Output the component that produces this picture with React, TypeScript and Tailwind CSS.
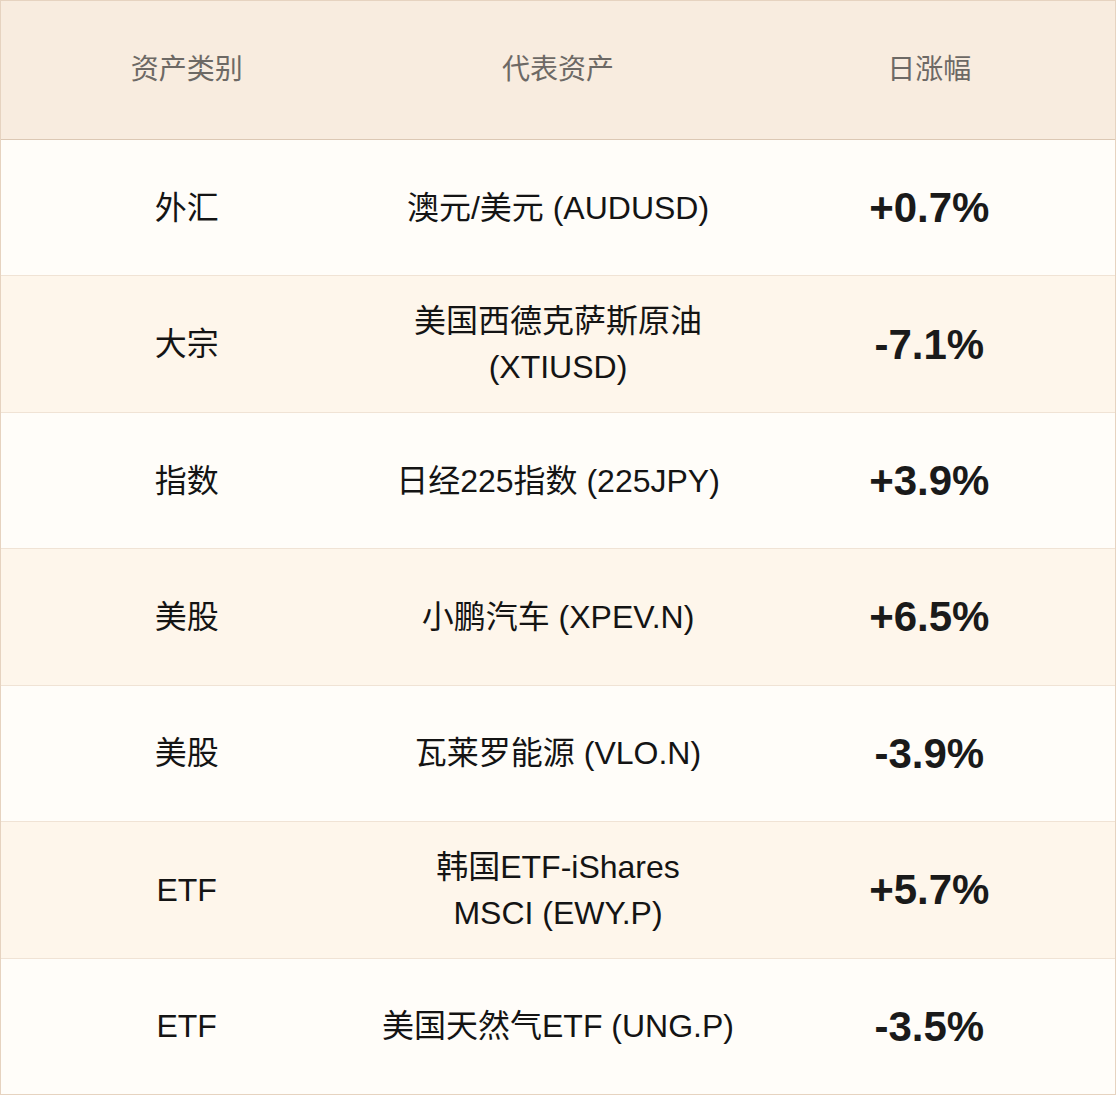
import React from 'react';

type Row = {
    category: string;
    asset: string[];
    change: string;
};

const rows: Row[] = [
    { category: '外汇', asset: ['澳元/美元 (AUDUSD)'], change: '+0.7%' },
    { category: '大宗', asset: ['美国西德克萨斯原油', '(XTIUSD)'], change: '-7.1%' },
    { category: '指数', asset: ['日经225指数 (225JPY)'], change: '+3.9%' },
    { category: '美股', asset: ['小鹏汽车 (XPEV.N)'], change: '+6.5%' },
    { category: '美股', asset: ['瓦莱罗能源 (VLO.N)'], change: '-3.9%' },
    { category: 'ETF', asset: ['韩国ETF-iShares', 'MSCI (EWY.P)'], change: '+5.7%' },
    { category: 'ETF', asset: ['美国天然气ETF (UNG.P)'], change: '-3.5%' },
];

const font = "font-['Liberation_Sans','Noto_Sans_CJK_SC',sans-serif]";

export default function App() {
    return (
        <div className={`${font} w-[1116px] h-[1095px] flex flex-col border border-[#e6d3c0] bg-[#fffdf9]`}>
            <div className="h-[139px] shrink-0 grid grid-cols-3 items-center border-b border-[#dcc8b4] bg-[#f8ecdf] text-[28px] text-[#6d6965]">
                <div className="text-center">资产类别</div>
                <div className="text-center">代表资产</div>
                <div className="text-center">日涨幅</div>
            </div>
            {rows.map((row, i) => (
                <div
                    key={i}
                    className={`flex-1 grid grid-cols-3 items-center ${i % 2 === 1 ? 'bg-[#fef6eb]' : 'bg-[#fffdf9]'} ${i < rows.length - 1 ? 'border-b border-[#f0e3d5]' : ''}`}
                >
                    <div className="text-center text-[32px] text-[#141414]">{row.category}</div>
                    <div className="text-center text-[32px] leading-[46px] text-[#141414] whitespace-nowrap">
                        {row.asset.map((line, j) => (
                            <div key={j}>{line}</div>
                        ))}
                    </div>
                    <div className="text-center text-[42px] font-bold text-[#1a1a1a]">{row.change}</div>
                </div>
            ))}
        </div>
    );
}
